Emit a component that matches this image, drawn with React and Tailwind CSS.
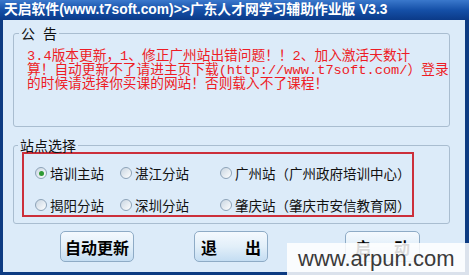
import React from 'react'

const cjk = { fontFamily: '"Noto Sans CJK SC", sans-serif' }
const redFont = { fontFamily: '"Liberation Mono", "Noto Sans CJK SC", monospace' }
const titleFont = { fontFamily: '"Liberation Sans", "Noto Sans CJK SC", sans-serif' }

function Radio({ label, checked }) {
  return (
    <div className="flex items-center gap-[3px] h-[16px]">
      <span className="w-[12px] h-[12px] rounded-full border border-[#8da3b8] bg-gradient-to-br from-[#c9d6e2] to-white flex items-center justify-center">
        {checked && <span className="w-[5px] h-[5px] rounded-full bg-[#2f9a34]" />}
      </span>
      <span className="text-[13.5px] leading-[16px] text-[#111] whitespace-nowrap">{label}</span>
    </div>
  )
}

function Btn({ children, className }) {
  return (
    <button
      className={
        'h-[31px] rounded-[5px] border border-[#8eabc6] bg-gradient-to-b from-[#f4f9fe] via-[#e2eff9] to-[#c4ddf2] text-[16px] font-bold text-black flex items-center ' +
        className
      }
    >
      {children}
    </button>
  )
}

export default function App() {
  return (
    <div className="w-[469px] h-[275px] relative overflow-hidden bg-[#0d3b82]" style={cjk}>
      {/* title bar */}
      <div className="h-[20px] bg-gradient-to-b from-[#3a78cc] via-[#1550a8] to-[#0b3a88] flex items-center pl-[4px]">
        <span className="text-white font-bold text-[13.8px] leading-[16px] whitespace-nowrap" style={titleFont}>
          天启软件(www.t7soft.com)&gt;&gt;广东人才网学习辅助作业版 V3.3
        </span>
      </div>

      {/* body */}
      <div className="ml-[3px] w-[462px] h-[252px] bg-[#dcebf9] flex flex-col">
        <fieldset className="mt-[5px] ml-[10px] w-[437px] h-[102px] border border-[#a9bdd0] rounded-[3px]">
          <legend className="ml-[5px] px-[2px] text-[14px] leading-[16px] text-[#111]">
            <span>公</span>
            <span className="ml-[8px]">告</span>
          </legend>
          <div className="pt-[9px] pl-[13px] text-[13.7px] leading-[14px] text-[#ee1c25] whitespace-nowrap" style={redFont}>
            <div>3.4版本更新，1、修正广州站出错问题！！2、加入激活天数计</div>
            <div>算！自动更新不了请进主页下载(http://www.t7soft.com/）登录</div>
            <div>的时候请选择你买课的网站！否则载入不了课程！</div>
          </div>
        </fieldset>

        <fieldset className="mt-[10px] ml-[10px] w-[437px] h-[87px] border border-[#a9bdd0] rounded-[3px]">
          <legend className="ml-[4px] px-[2px] text-[14px] leading-[16px] text-[#111]">站点选择</legend>
          <div className="-mt-[1px] ml-[8px] w-[392px] h-[65px] border-2 border-[#cc2f3a] pt-[11px] pl-[11px]">
            <div className="grid grid-cols-[85px_100px_1fr] gap-y-[16px]">
              <Radio label="培训主站" checked />
              <Radio label="湛江分站" />
              <Radio label="广州站（广州政府培训中心）" />
              <Radio label="揭阳分站" />
              <Radio label="深圳分站" />
              <Radio label="肇庆站（肇庆市安信教育网）" />
            </div>
          </div>
        </fieldset>

        <div className="mt-[7px] flex">
          <Btn className="ml-[57px] w-[74px] justify-center">自动更新</Btn>
          <Btn className="ml-[60px] w-[74px] justify-between px-[6px]">
            <span>退</span>
            <span>出</span>
          </Btn>
          <Btn className="ml-[77px] w-[75px] justify-between px-[9px]">
            <span>启</span>
            <span>动</span>
          </Btn>
        </div>
      </div>

      {/* watermark overlay */}
      <div className="absolute left-[287px] top-[243px] right-0 bottom-0 bg-white/85 pl-[11px]">
        <span className="text-[22px] leading-[32px] text-[#3a3a3a]" style={{ fontFamily: '"Liberation Sans", Arial, sans-serif' }}>
          www.arpun.com
        </span>
      </div>
    </div>
  )
}
